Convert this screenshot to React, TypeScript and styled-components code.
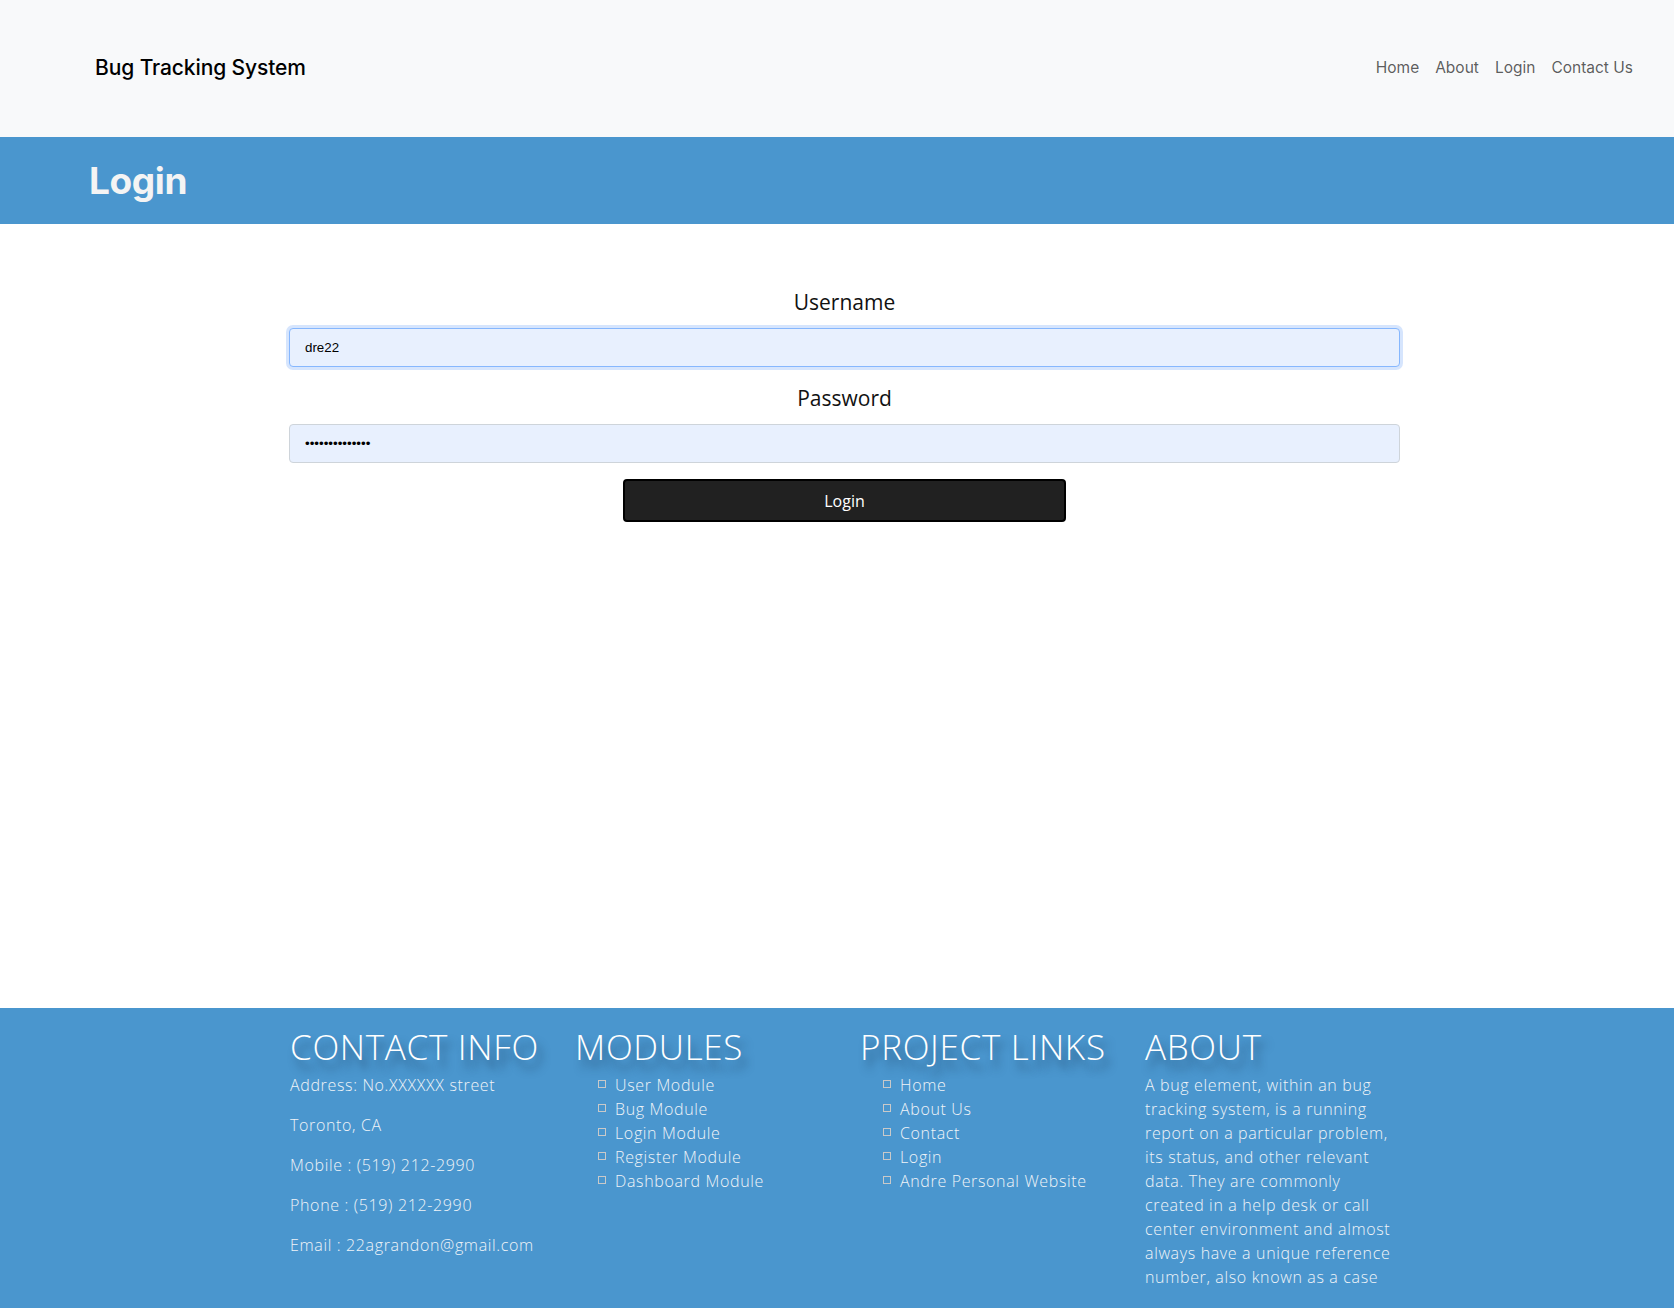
import * as React from 'react';
import styled, { createGlobalStyle } from 'styled-components';

const GlobalStyle = createGlobalStyle`
    body {
        margin: 0;
        background: #ffffff;
        font-family: "Open Sans", sans-serif;
    }
    * {
        box-sizing: border-box;
    }
`

const BLUE = '#4a96ce';

const Navbar = styled.nav`
    height: 137px;
    background: #f8f9fa;
    display: flex;
    align-items: center;
    justify-content: space-between;
    padding: 0 33px 0 95px;
    font-family: Inter, "Noto Sans", sans-serif;
`

const Brand = styled.a`
    font-size: 21px;
    font-weight: 500;
    color: #000;
    text-decoration: none;
    letter-spacing: -0.1px;
    margin-top: -2px;
`

const NavLinks = styled.ul`
    display: flex;
    list-style: none;
    margin: 0;
    padding: 0;
    margin-top: -3px;
`

const NavLink = styled.a`
    display: block;
    padding: 8px;
    font-size: 15.5px;
    color: rgba(0, 0, 0, 0.65);
    text-decoration: none;
`

const Banner = styled.header`
    height: 87px;
    background: ${BLUE};
    display: flex;
    align-items: center;
    padding-left: 89px;
`

const BannerTitle = styled.h1`
    margin: 0;
    font-family: Inter, "Noto Sans", sans-serif;
    font-size: 37px;
    font-weight: 700;
    color: #f4f4f4;
    letter-spacing: -0.4px;
`

const Main = styled.main`
    min-height: 784px;
    padding-top: 63px;
`

const Form = styled.form`
    width: 1111px;
    margin-left: 289px;
    display: flex;
    flex-direction: column;
    align-items: center;
`

const Label = styled.label`
    font-size: 21px;
    color: #111;
    line-height: 30px;
    margin-bottom: 11px;
`

const Input = styled.input<{ $focused?: boolean }>`
    width: 100%;
    height: 39px;
    padding: 0 15px;
    margin-bottom: 16px;
    font-family: "Liberation Sans", Arial, sans-serif;
    font-size: 13.33px;
    color: #000;
    background: #e8f0fe;
    border: 1px solid ${props => props.$focused ? '#86b7fe' : '#ced4da'};
    border-radius: 4px;
    box-shadow: ${props => props.$focused ? '0 0 0 3px rgba(120, 170, 250, 0.3)' : 'none'};
    outline: none;
`

const Button = styled.button`
    width: 443px;
    height: 43px;
    background: #212121;
    border: 2px solid #000;
    border-radius: 4px;
    color: #fff;
    font-family: "Open Sans", sans-serif;
    font-size: 16px;
`

const Footer = styled.footer`
    background: ${BLUE};
    height: 300px;
    overflow: hidden;
    padding-top: 18px;
`

const FooterRow = styled.div`
    display: grid;
    grid-template-columns: repeat(4, 285px);
    margin-left: 278px;
`

const FooterCol = styled.div`
    padding: 0 12px;
`

const FooterHeading = styled.h3`
    margin: 0 0 5px;
    font-family: "Open Sans", sans-serif;
    font-weight: 300;
    font-size: 35px;
    line-height: 42px;
    color: #fff;
    white-space: nowrap;
    letter-spacing: 0.7px;
    text-shadow: 5px 9px 8px rgba(20, 50, 80, 0.6);
`

const FooterText = styled.p`
    margin: 0 0 16px;
    font-size: 16px;
    font-weight: 300;
    line-height: 24px;
    letter-spacing: 0.65px;
    color: #f0f4f8;
`

const LinkList = styled.ul`
    list-style: none;
    margin: 0;
    padding-left: 40px;
`

const LinkItem = styled.li`
    position: relative;
    font-size: 16px;
    font-weight: 300;
    line-height: 24px;
    letter-spacing: 0.65px;
    color: #f0f4f8;

    &::before {
        content: '';
        position: absolute;
        left: -17px;
        top: 7px;
        width: 6px;
        height: 6px;
        border: 1px solid #c9c9c9;
    }
`

const AboutText = styled.p`
    margin: 0;
    max-width: 254px;
    font-size: 16px;
    font-weight: 300;
    line-height: 24px;
    letter-spacing: 0.65px;
    color: #f0f4f8;
`

const modules = ['User Module', 'Bug Module', 'Login Module', 'Register Module', 'Dashboard Module'];
const projectLinks = ['Home', 'About Us', 'Contact', 'Login', 'Andre Personal Website'];

export default function App() {
    return (
        <>
            <GlobalStyle />
            <Navbar>
                <Brand href="#">Bug Tracking System</Brand>
                <NavLinks>
                    <li><NavLink href="#">Home</NavLink></li>
                    <li><NavLink href="#">About</NavLink></li>
                    <li><NavLink href="#">Login</NavLink></li>
                    <li><NavLink href="#">Contact Us</NavLink></li>
                </NavLinks>
            </Navbar>
            <Banner>
                <BannerTitle>Login</BannerTitle>
            </Banner>
            <Main>
                <Form onSubmit={e => e.preventDefault()}>
                    <Label htmlFor="username">Username</Label>
                    <Input id="username" $focused defaultValue="dre22" />
                    <Label htmlFor="password">Password</Label>
                    <Input id="password" type="password" defaultValue="dre22password1" />
                    <Button type="submit">Login</Button>
                </Form>
            </Main>
            <Footer>
                <FooterRow>
                    <FooterCol>
                        <FooterHeading>CONTACT INFO</FooterHeading>
                        <FooterText>Address: No.XXXXXX street</FooterText>
                        <FooterText>Toronto, CA</FooterText>
                        <FooterText>Mobile : (519) 212-2990</FooterText>
                        <FooterText>Phone : (519) 212-2990</FooterText>
                        <FooterText>Email : 22agrandon@gmail.com</FooterText>
                    </FooterCol>
                    <FooterCol>
                        <FooterHeading>MODULES</FooterHeading>
                        <LinkList>
                            {modules.map(m => <LinkItem key={m}>{m}</LinkItem>)}
                        </LinkList>
                    </FooterCol>
                    <FooterCol>
                        <FooterHeading>PROJECT LINKS</FooterHeading>
                        <LinkList>
                            {projectLinks.map(l => <LinkItem key={l}>{l}</LinkItem>)}
                        </LinkList>
                    </FooterCol>
                    <FooterCol>
                        <FooterHeading>ABOUT</FooterHeading>
                        <AboutText>
                            A bug element, within an bug tracking system, is a running report on a particular
                            problem, its status, and other relevant data. They are commonly created in a help
                            desk or call center environment and almost always have a unique reference number,
                            also known as a case
                        </AboutText>
                    </FooterCol>
                </FooterRow>
            </Footer>
        </>
    );
}
